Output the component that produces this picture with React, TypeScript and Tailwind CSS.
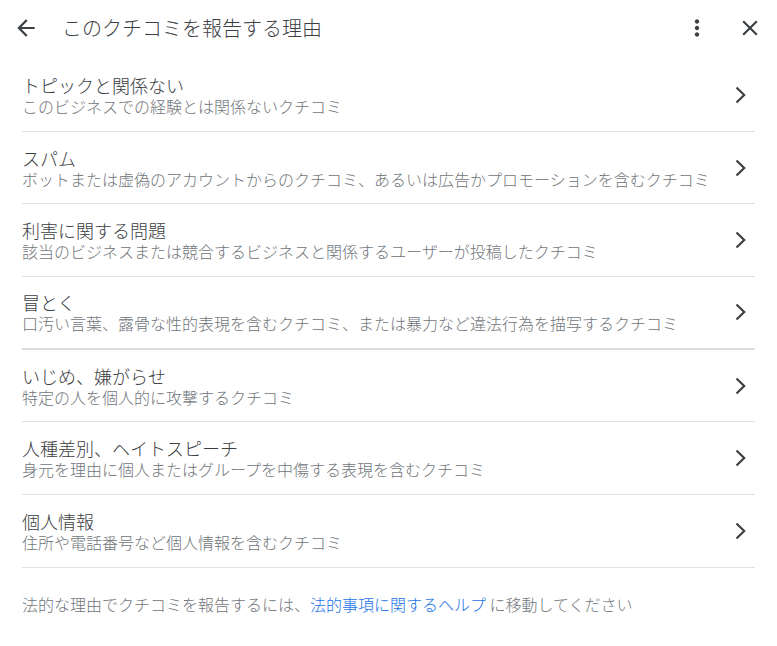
const reasons = [
  { title: "トピックと関係ない", desc: "このビジネスでの経験とは関係ないクチコミ" },
  {
    title: "スパム",
    desc: "ボットまたは虚偽のアカウントからのクチコミ、あるいは広告かプロモーションを含むクチコミ",
  },
  {
    title: "利害に関する問題",
    desc: "該当のビジネスまたは競合するビジネスと関係するユーザーが投稿したクチコミ",
  },
  {
    title: "冒とく",
    desc: "口汚い言葉、露骨な性的表現を含むクチコミ、または暴力など違法行為を描写するクチコミ",
    thick: true,
  },
  { title: "いじめ、嫌がらせ", desc: "特定の人を個人的に攻撃するクチコミ" },
  { title: "人種差別、ヘイトスピーチ", desc: "身元を理由に個人またはグループを中傷する表現を含むクチコミ" },
  { title: "個人情報", desc: "住所や電話番号など個人情報を含むクチコミ" },
];

function BackIcon() {
  return (
    <svg viewBox="0 0 24 24" className="w-[26px] h-[26px] fill-[#3c4043]">
      <path d="M20 11H7.83l5.59-5.59L12 4l-8 8 8 8 1.41-1.41L7.83 13H20v-2z" />
    </svg>
  );
}

function MoreIcon() {
  return (
    <svg viewBox="0 0 24 24" className="w-[26px] h-[26px] fill-[#3c4043]">
      <path d="M12 8c1.1 0 2-.9 2-2s-.9-2-2-2-2 .9-2 2 .9 2 2 2zm0 2c-1.1 0-2 .9-2 2s.9 2 2 2 2-.9 2-2-.9-2-2-2zm0 6c-1.1 0-2 .9-2 2s.9 2 2 2 2-.9 2-2-.9-2-2-2z" />
    </svg>
  );
}

function CloseIcon() {
  return (
    <svg viewBox="0 0 24 24" className="w-[26px] h-[26px] fill-[#3c4043]">
      <path d="M19 6.41L17.59 5 12 10.59 6.41 5 5 6.41 10.59 12 5 17.59 6.41 19 12 13.41 17.59 19 19 17.59 13.41 12z" />
    </svg>
  );
}

function Chevron() {
  return (
    <svg viewBox="0 0 12 18" className="w-[12px] h-[18px]" fill="none">
      <polyline points="1.5,1.5 9.2,9 1.5,16.5" stroke="#3c4043" strokeWidth="2.2" />
    </svg>
  );
}

export default function App() {
  return (
    <div
      className="w-[777px] h-[646px] bg-white overflow-hidden font-light"
      style={{ fontFamily: '"Noto Sans CJK JP", "Roboto", sans-serif' }}
    >
      {/* header */}
      <div className="h-[59px] flex items-center pb-[3px] pl-[13px] pr-[14px]">
        <button className="flex">
          <BackIcon />
        </button>
        <h1 className="ml-[23px] flex-1 text-[20px] leading-[28px] text-[#3c4043]">
          このクチコミを報告する理由
        </h1>
        <button className="flex">
          <MoreIcon />
        </button>
        <button className="flex ml-[27px]">
          <CloseIcon />
        </button>
      </div>

      <ul className="mx-[22px]">
        {reasons.map((r) => (
          <li
            key={r.title}
            className={
              r.thick
                ? "h-[72.7px] flex items-center border-b-2 border-[#dadce0]"
                : "h-[72.7px] flex items-center border-b border-[#e0e0e0]"
            }
          >
            <div className="flex-1 min-w-0">
              <p className="text-[18px] leading-[22px] text-[#3c4043]">{r.title}</p>
              <p className="text-[16px] leading-[20px] text-[#70757a] whitespace-nowrap">{r.desc}</p>
            </div>
            <div className="mr-[8px] flex">
              <Chevron />
            </div>
          </li>
        ))}
      </ul>

      <p className="mx-[22px] pt-[24px] text-[16px] leading-[24px] text-[#70757a]">
        法的な理由でクチコミを報告するには、
        <a className="text-[#1a73e8]">法的事項に関するヘルプ</a> に移動してください
      </p>
    </div>
  );
}
